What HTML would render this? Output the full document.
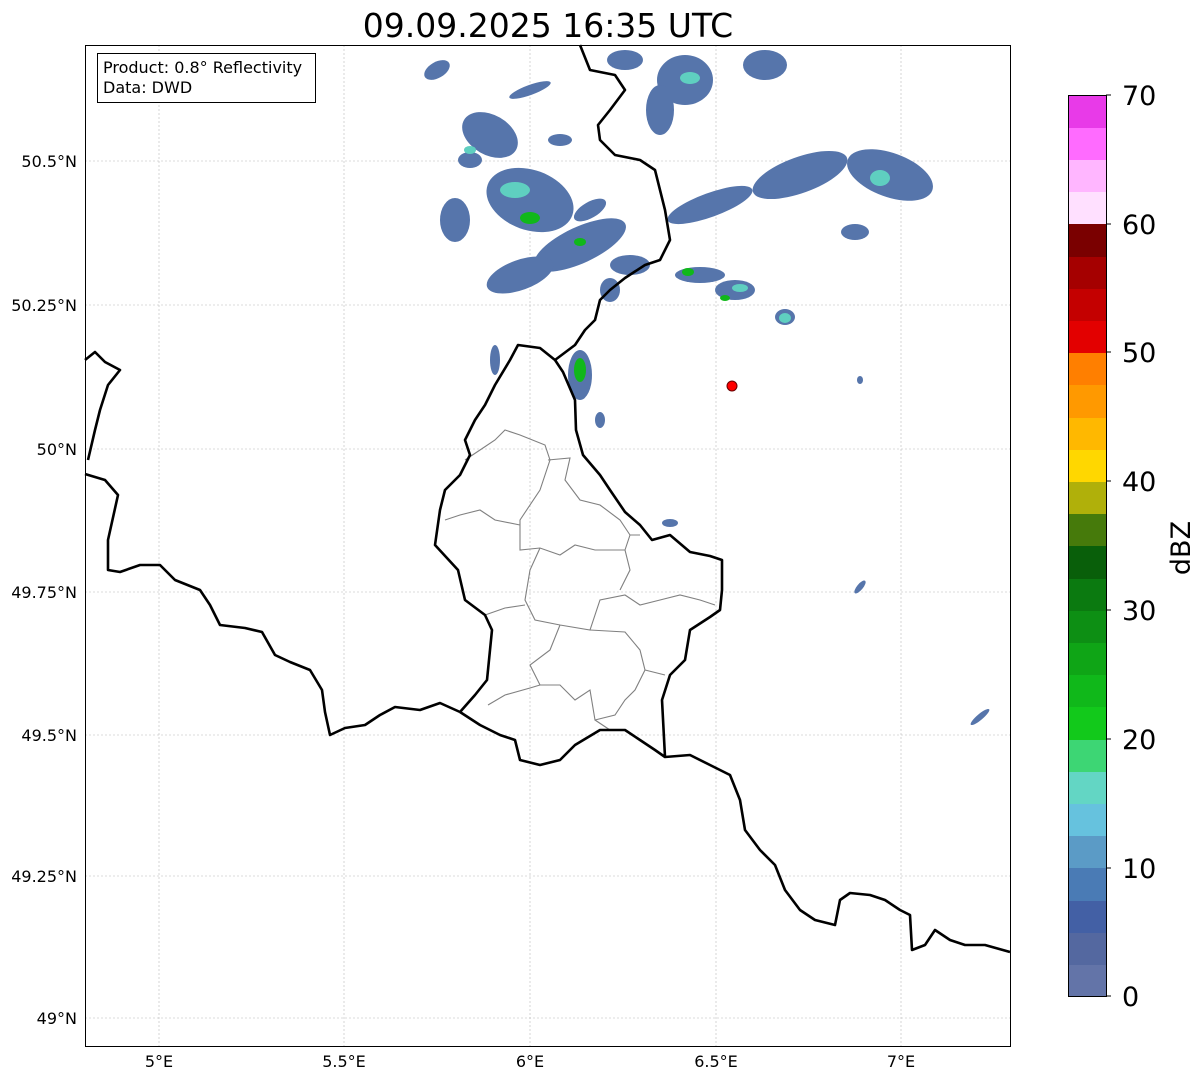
<!DOCTYPE html>
<html><head><meta charset="utf-8"><style>
html,body{margin:0;padding:0;background:#fff;width:1202px;height:1081px;overflow:hidden;font-family:"Liberation Sans","DejaVu Sans",sans-serif}
</style></head><body>
<svg width="1202" height="1081" xmlns="http://www.w3.org/2000/svg" font-family="DejaVu Sans, Liberation Sans, sans-serif">
<rect width="1202" height="1081" fill="#fff"/>
<text x="548" y="37" font-size="33" text-anchor="middle" fill="#000">09.09.2025 16:35 UTC</text>
<g stroke="#b8b8b8" stroke-width="0.6" stroke-dasharray="2,2">
<line x1="85" y1="161" x2="1010" y2="161"/><line x1="85" y1="305" x2="1010" y2="305"/><line x1="85" y1="449" x2="1010" y2="449"/><line x1="85" y1="592" x2="1010" y2="592"/><line x1="85" y1="735" x2="1010" y2="735"/><line x1="85" y1="876" x2="1010" y2="876"/><line x1="85" y1="1018" x2="1010" y2="1018"/>
<line x1="159" y1="45" x2="159" y2="1046"/><line x1="344" y1="45" x2="344" y2="1046"/><line x1="530" y1="45" x2="530" y2="1046"/><line x1="716" y1="45" x2="716" y2="1046"/><line x1="901" y1="45" x2="901" y2="1046"/>
</g>
<g fill="#5675ab">
<ellipse cx="437" cy="70" rx="14" ry="8" transform="rotate(-30 437 70)"/>
<ellipse cx="530" cy="90" rx="22" ry="5" transform="rotate(-20 530 90)"/>
<ellipse cx="625" cy="60" rx="18" ry="10"/>
<ellipse cx="685" cy="80" rx="28" ry="25"/>
<ellipse cx="660" cy="110" rx="14" ry="25"/>
<ellipse cx="765" cy="65" rx="22" ry="15"/>
<ellipse cx="490" cy="135" rx="30" ry="20" transform="rotate(30 490 135)"/>
<ellipse cx="530" cy="200" rx="45" ry="30" transform="rotate(20 530 200)"/>
<ellipse cx="455" cy="220" rx="15" ry="22"/>
<ellipse cx="580" cy="245" rx="50" ry="18" transform="rotate(-25 580 245)"/>
<ellipse cx="520" cy="275" rx="35" ry="15" transform="rotate(-20 520 275)"/>
<ellipse cx="710" cy="205" rx="45" ry="12" transform="rotate(-20 710 205)"/>
<ellipse cx="800" cy="175" rx="50" ry="18" transform="rotate(-20 800 175)"/>
<ellipse cx="890" cy="175" rx="45" ry="22" transform="rotate(20 890 175)"/>
<ellipse cx="855" cy="232" rx="14" ry="8"/>
<ellipse cx="700" cy="275" rx="25" ry="8"/>
<ellipse cx="735" cy="290" rx="20" ry="10"/>
<ellipse cx="785" cy="317" rx="10" ry="8"/>
<ellipse cx="630" cy="265" rx="20" ry="10"/>
<ellipse cx="610" cy="290" rx="10" ry="12"/>
<ellipse cx="580" cy="375" rx="12" ry="25"/>
<ellipse cx="495" cy="360" rx="5" ry="15"/>
<ellipse cx="600" cy="420" rx="5" ry="8"/>
<ellipse cx="670" cy="523" rx="8" ry="4"/>
<ellipse cx="860" cy="587" rx="3" ry="8" transform="rotate(40 860 587)"/>
<ellipse cx="980" cy="717" rx="3" ry="12" transform="rotate(50 980 717)"/>
<ellipse cx="860" cy="380" rx="3" ry="4"/>
<ellipse cx="470" cy="160" rx="12" ry="8"/>
<ellipse cx="560" cy="140" rx="12" ry="6"/>
<ellipse cx="590" cy="210" rx="18" ry="8" transform="rotate(-30 590 210)"/>
</g>
<g fill="#5fcfc0">
<ellipse cx="690" cy="78" rx="10" ry="6"/><ellipse cx="515" cy="190" rx="15" ry="8"/><ellipse cx="880" cy="178" rx="10" ry="8"/><ellipse cx="470" cy="150" rx="6" ry="4"/><ellipse cx="785" cy="318" rx="6" ry="5"/><ellipse cx="740" cy="288" rx="8" ry="4"/>
</g>
<g fill="#10b81a">
<ellipse cx="530" cy="218" rx="10" ry="6"/><ellipse cx="580" cy="242" rx="6" ry="4"/><ellipse cx="580" cy="370" rx="6" ry="12"/><ellipse cx="688" cy="272" rx="6" ry="4"/><ellipse cx="725" cy="298" rx="5" ry="3"/>
</g>
<g fill="none" stroke="#808080" stroke-width="1.1">
<polyline points="465,460 480,450 495,440 505,430 520,435 545,445 550,460 540,490 520,520 520,550 540,548 560,555 575,545 595,550 625,550 630,535 640,535"/>
<polyline points="548,460 570,458 565,480 580,500 600,505 620,520 630,535"/>
<polyline points="445,520 460,515 480,510 495,520 520,525"/>
<polyline points="540,548 530,570 525,600 535,620 560,625 590,630 600,600 625,595 640,605 660,600 680,595 700,600 715,605"/>
<polyline points="625,550 630,570 620,590"/>
<polyline points="485,615 505,608 525,605"/>
<polyline points="560,625 550,650 530,665 540,685 560,685 575,700 590,690 595,720 615,715 625,700 635,690 645,670 665,675"/>
<polyline points="590,630 625,632 640,650 645,670"/>
<polyline points="488,705 505,695 530,688 540,685"/>
<polyline points="595,720 610,730"/>
</g>
<g fill="none" stroke="#000" stroke-width="2.6" stroke-linejoin="round">
<polyline points="85,360 95,352 105,362 120,370 108,385 100,410 95,430 88,460"/>
<polyline points="85,474 105,480 118,495 108,540 108,570 120,572 140,565 160,565 175,580 200,590 210,605 220,625 245,628 262,632 275,655 290,662 310,670 322,690 325,712 330,735 345,728 365,725 380,715 395,707 420,710 440,703 460,712"/>
<polyline points="460,712 475,695 487,680 490,650 492,630 485,615 465,600 458,570 435,545 440,510 445,490 460,475 470,455 465,440 475,420 485,405 495,385 510,360 518,345 540,348 555,360 563,372 575,400 576,430 583,455 600,475 610,490 625,512 640,525 652,540 670,535 690,552 710,556 722,560 722,590 720,610 710,617 690,630 685,660 670,675 662,700 665,757"/>
<polyline points="460,712 480,725 500,735 515,740 520,760 540,765 560,760 575,745 600,730 625,730 640,740 655,750 665,757 690,755 710,765 730,775 740,800 745,830 760,850 775,865 785,890 800,910 815,920 835,925 840,900 850,893 870,895 885,900 900,910 910,915 912,950 925,945 935,930 950,940 965,945 985,945 1010,952"/>
<polyline points="555,360 575,345 585,330 595,320 600,300 610,290 625,278 645,265 660,260 670,240 665,210 660,190 655,170 640,160 615,155 600,140 598,125 610,110 625,90 615,75 590,70 580,45"/>
</g>
<circle cx="732" cy="386" r="5" fill="#f00" stroke="#600" stroke-width="1"/>
<rect x="85.5" y="45.5" width="925" height="1001" fill="none" stroke="#000" stroke-width="1"/>
<rect x="97.5" y="53.5" width="218" height="49" fill="#fff" stroke="#000" stroke-width="1"/>
<text x="103" y="73" font-size="16">Product: 0.8° Reflectivity</text>
<text x="103" y="93" font-size="16">Data: DWD</text>
<g font-size="16" text-anchor="end">
<text x="77" y="167">50.5°N</text><text x="77" y="311">50.25°N</text><text x="77" y="455">50°N</text><text x="77" y="598">49.75°N</text><text x="77" y="741">49.5°N</text><text x="77" y="882">49.25°N</text><text x="77" y="1024">49°N</text>
</g>
<g font-size="16" text-anchor="middle">
<text x="159" y="1067">5°E</text><text x="344" y="1067">5.5°E</text><text x="530" y="1067">6°E</text><text x="716" y="1067">6.5°E</text><text x="901" y="1067">7°E</text>
</g>
<g>
<rect x="1068" y="964" width="38" height="33" fill="#6374a8"/>
<rect x="1068" y="932" width="38" height="33" fill="#5468a0"/>
<rect x="1068" y="900" width="38" height="33" fill="#4360a5"/>
<rect x="1068" y="868" width="38" height="33" fill="#4a7bb5"/>
<rect x="1068" y="835" width="38" height="33" fill="#5b9bc6"/>
<rect x="1068" y="803" width="38" height="33" fill="#66c2de"/>
<rect x="1068" y="771" width="38" height="33" fill="#63d6c4"/>
<rect x="1068" y="739" width="38" height="33" fill="#3dd674"/>
<rect x="1068" y="707" width="38" height="33" fill="#12c91b"/>
<rect x="1068" y="674" width="38" height="33" fill="#10b81a"/>
<rect x="1068" y="642" width="38" height="33" fill="#0fa516"/>
<rect x="1068" y="610" width="38" height="33" fill="#0d8f14"/>
<rect x="1068" y="578" width="38" height="33" fill="#0b7a10"/>
<rect x="1068" y="546" width="38" height="33" fill="#095f0a"/>
<rect x="1068" y="513" width="38" height="33" fill="#467a0b"/>
<rect x="1068" y="481" width="38" height="33" fill="#b0b00a"/>
<rect x="1068" y="449" width="38" height="33" fill="#ffd700"/>
<rect x="1068" y="417" width="38" height="33" fill="#ffb800"/>
<rect x="1068" y="385" width="38" height="33" fill="#ff9900"/>
<rect x="1068" y="352" width="38" height="33" fill="#ff7f00"/>
<rect x="1068" y="320" width="38" height="33" fill="#e30000"/>
<rect x="1068" y="288" width="38" height="33" fill="#c40000"/>
<rect x="1068" y="256" width="38" height="33" fill="#a50000"/>
<rect x="1068" y="224" width="38" height="33" fill="#7a0000"/>
<rect x="1068" y="191" width="38" height="33" fill="#ffe0ff"/>
<rect x="1068" y="159" width="38" height="33" fill="#ffb6ff"/>
<rect x="1068" y="127" width="38" height="33" fill="#ff6bff"/>
<rect x="1068" y="95" width="38" height="33" fill="#e83ae8"/>
<rect x="1068.5" y="95.5" width="38" height="901" fill="none" stroke="#000" stroke-width="1"/>
</g>
<g font-size="27">
<text x="1122" y="1006">0</text><text x="1122" y="878">10</text><text x="1122" y="749">20</text><text x="1122" y="620">30</text><text x="1122" y="491">40</text><text x="1122" y="362">50</text><text x="1122" y="234">60</text><text x="1122" y="105">70</text>
</g>
<g stroke="#000" stroke-width="1"><line x1="1106" y1="996" x2="1111" y2="996"/><line x1="1106" y1="868" x2="1111" y2="868"/><line x1="1106" y1="739" x2="1111" y2="739"/><line x1="1106" y1="610" x2="1111" y2="610"/><line x1="1106" y1="481" x2="1111" y2="481"/><line x1="1106" y1="352" x2="1111" y2="352"/><line x1="1106" y1="224" x2="1111" y2="224"/><line x1="1106" y1="95" x2="1111" y2="95"/></g>
<text x="1190" y="548" font-size="27" text-anchor="middle" transform="rotate(-90 1190 548)">dBZ</text>
</svg>
</body></html>
